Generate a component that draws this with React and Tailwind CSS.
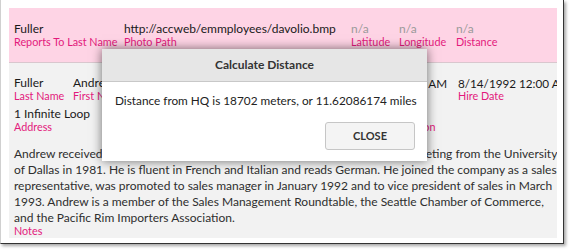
export default function App() {
  const font = { fontFamily: 'Lato, "Open Sans", sans-serif' };
  const label = "text-[10.8px] leading-[11px] text-[#e3197c] whitespace-nowrap";
  const value = "text-[12px] leading-[14px] text-[#1a1a1a] whitespace-nowrap";
  const dateV = "text-[11.7px] leading-[14px] text-[#1a1a1a] whitespace-nowrap";
  const na = "text-[12px] leading-[14px] text-[#9a9a9a] whitespace-nowrap";
  const lines = [
    "Andrew received his BTS commercial in 1974 and a Ph.D. in international marketing from the University",
    "of Dallas in 1981. He is fluent in French and Italian and reads German. He joined the company as a sales",
    "representative, was promoted to sales manager in January 1992 and to vice president of sales in March",
    "1993. Andrew is a member of the Sales Management Roundtable, the Seattle Chamber of Commerce,",
    "and the Pacific Rim Importers Association.",
  ];
  return (
    <div className="w-[570px] h-[250px] bg-white overflow-hidden relative" style={font}>
      <div className="w-[564px] h-[244px] bg-white border-l border-l-[#d0d0d0] border-r border-b border-r-[#333] border-b-[#333] shadow-[2px_2px_3px_rgba(0,0,0,0.35)] p-[8px] pr-[6px] pb-[6px]">
        <div className="h-[230px] flex flex-col bg-[#f2f2f2] overflow-hidden">
          <div className="h-[55px] shrink-0 bg-[#fed4e5] border-b border-[#d9c7ce] flex items-start pt-[14px] pl-[5px]">
            <div className="w-[110px] shrink-0">
              <div className={value}>Fuller</div>
              <div className={label}>Reports To Last Name</div>
            </div>
            <div className="w-[227px] shrink-0">
              <div className={value}>http://accweb/emmployees/davolio.bmp</div>
              <div className={label}>Photo Path</div>
            </div>
            <div className="w-[48px] shrink-0">
              <div className={na}>n/a</div>
              <div className={label}>Latitude</div>
            </div>
            <div className="w-[57px] shrink-0">
              <div className={na}>n/a</div>
              <div className={label}>Longitude</div>
            </div>
            <div>
              <div className={na}>n/a</div>
              <div className={label}>Distance</div>
            </div>
          </div>
          <div className="flex pl-[5px] pt-[13px]">
            <div className="w-[59px] shrink-0">
              <div className={value}>Fuller</div>
              <div className={label}>Last Name</div>
            </div>
            <div className="w-[230px] shrink-0">
              <div className={value}>Andrew</div>
              <div className={label}>First Name</div>
            </div>
            <div className="w-[155px] shrink-0 flex flex-col items-end pr-[11px]">
              <div className={dateV}>2/19/1952 12:00 AM</div>
              <div className={label + " self-start"}>Birth Date</div>
            </div>
            <div>
              <div className={dateV}>8/14/1992 12:00 AM</div>
              <div className={label}>Hire Date</div>
            </div>
          </div>
          <div className="flex pl-[5px] mt-[6px]">
            <div className="w-[389px] shrink-0">
              <div className={value}>1 Infinite Loop</div>
              <div className={label}>Address</div>
            </div>
            <div className="pt-[14px]">
              <div className={label}>Region</div>
            </div>
          </div>
          <div className="pl-[5px] mt-[14px] text-[12px] leading-[16px] text-[#2e2e2e]">
            {lines.map((l, i) => (
              <div key={i} className="whitespace-nowrap">{l}</div>
            ))}
            <div className={label + " -mt-[1px]"}>Notes</div>
          </div>
        </div>
      </div>
      <div className="absolute left-[102px] top-[49px] w-[325px] h-[112px] bg-white shadow-[0_0_10px_rgba(0,0,0,0.55)] flex flex-col">
        <div className="h-[33px] shrink-0 bg-[#e6e6e6] border-b border-[#c8c8c8] flex items-center justify-center text-[12px] font-bold text-[#333]">
          Calculate Distance
        </div>
        <div className="pl-[13px] pt-[11px] text-[11.8px] leading-[16px] text-[#222] whitespace-nowrap">
          Distance from HQ is 18702 meters, or 11.62086174 miles
        </div>
        <div className="flex justify-end pr-[12px] mt-[13px]">
          <button className="w-[90px] h-[28px] bg-[#f4f4f4] border border-[#c6c6c6] rounded-[3px] text-[11px] font-bold text-[#333]">
            CLOSE
          </button>
        </div>
      </div>
    </div>
  );
}
